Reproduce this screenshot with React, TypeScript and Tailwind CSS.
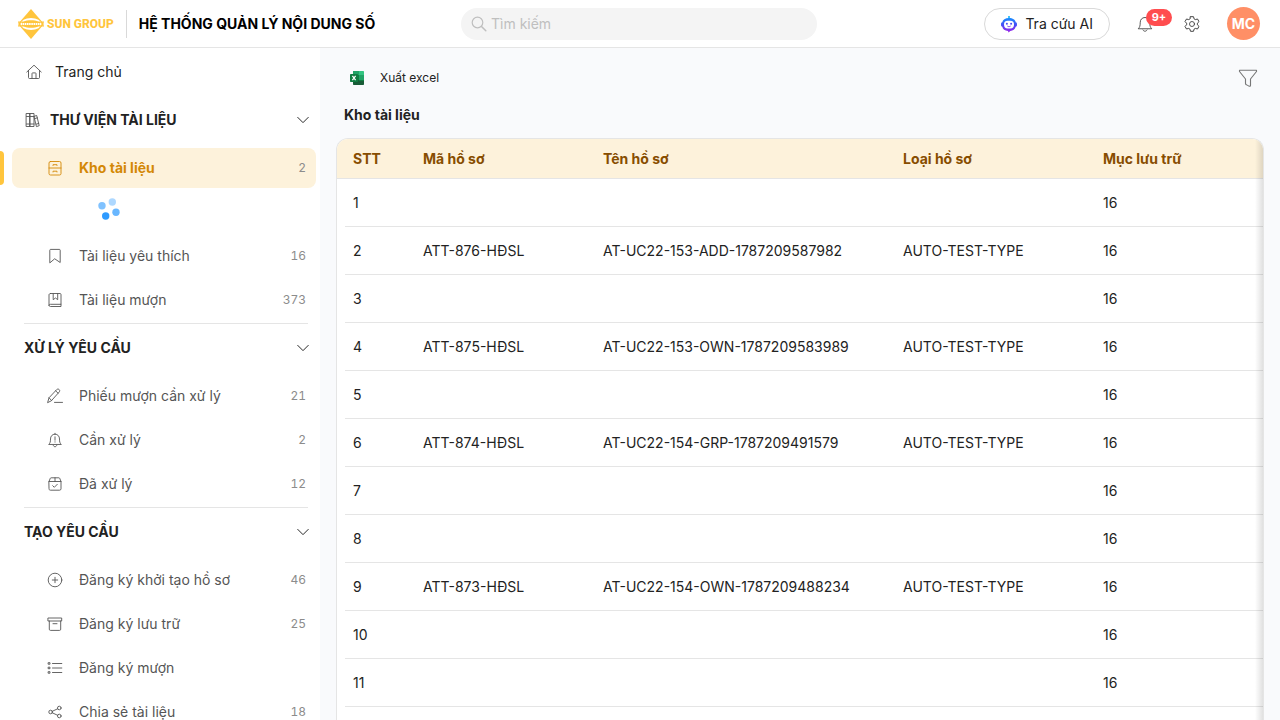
import type { ReactNode } from 'react';

type MenuItem = {
  label: string;
  icon: ReactNode;
  count?: number;
  active?: boolean;
  loading?: boolean;
};

type MenuSection = {
  title: string;
  icon?: ReactNode;
  items: MenuItem[];
};

type Dossier = {
  code?: string;
  name?: string;
  type?: string;
  archive: number;
};

function Icon({ children, className = 'h-4 w-4' }: { children: ReactNode; className?: string }) {
  return (
    <svg
      viewBox="0 0 16 16"
      className={`shrink-0 ${className}`}
      fill="none"
      stroke="currentColor"
      strokeWidth="0.9"
      strokeLinecap="round"
      strokeLinejoin="round"
      aria-hidden="true"
    >
      {children}
    </svg>
  );
}

const icons = {
  home: (
    <Icon>
      <path d="M.8 8 8 1.2 15.2 8M2.5 6.5v7c0 .7.4 1 1 1h9c.6 0 1-.3 1-1v-7M6 14.3V9.5c0-.4.2-.6.6-.6h2.8c.4 0 .6.2.6.6v4.8" />
    </Icon>
  ),
  library: (
    <Icon>
      <path d="M2.5 1.5H6v13H2.5zM6 1.5h4v13H6zM2.5 4.5H10M2.5 12H10M10.3 4.200l2.400-.7 2.500 10.200-2.400.8zM10.900 6.600l2.400-.8M12.200 12.200l2.500-.8" />
    </Icon>
  ),
  cabinet: (
    <Icon>
      <rect x="2" y="1.5" width="12" height="13.5" rx="1.5" />
      <path d="M2 8h12M6 5.5v-.8h4v.8M6 12v-.8h4v.8" />
    </Icon>
  ),
  bookmark: (
    <Icon>
      <path d="M2.8 14.5V2.2c0-.5.3-.8.8-.8h8.8c.5 0 .8.3.8.8v12.3L8 11z" />
    </Icon>
  ),
  book: (
    <Icon>
      <path d="M3.5 1.5H13c.6 0 1 .4 1 1v9.8H3.5c-.9 0-1.5.5-1.5 1.2V3c0-.9.6-1.5 1.5-1.5zM2 13.3c0 .8.6 1.2 1.5 1.2H14v-2.2M6.2 1.7v6L8.5 6l2.2 1.7v-6" />
    </Icon>
  ),
  edit: (
    <Icon>
      <path d="M.7 14.3 2 9.8l7.7-8.2c.7-.7 1.7-.7 2.4-.1.8.7.8 1.7.1 2.500L4.600 12.500zM8.600 2.800l2.500 2.400M2 9.800l2.600 2.700M7.500 14.400h8" />
    </Icon>
  ),
  bellAlert: (
    <Icon>
      <path d="M2 12.2c1.2-1.1 1.5-2.5 1.5-5.2C3.5 4.2 5.3 2.2 8 2.2s4.5 2 4.5 4.8c0 2.7.3 4.1 1.5 5.2zM6.3 13.5c.3.8.9 1.2 1.7 1.2s1.4-.4 1.7-1.2M8 2.2v-.9M8 4.800v3.400M8 9.800v.3" />
    </Icon>
  ),
  boxCheck: (
    <Icon>
      <path d="M2 5.500 3.300 2.300c.1-.3.4-.5.8-.5h7.800c.4 0 .7.2.8.5L14 5.500v7.300c0 .9-.5 1.400-1.400 1.400H3.400C2.500 14.200 2 13.700 2 12.800zM2 5.500h12M8 1.800v3.700M5.700 9.700l1.600 1.600 3-3" />
    </Icon>
  ),
  plusCircle: (
    <Icon>
      <circle cx="8" cy="8" r="6.8" />
      <path d="M8 5.3v5.400M5.300 8h5.400" />
    </Icon>
  ),
  archive: (
    <Icon>
      <path d="M1.300 2h13.400v3H1.300zM2.300 5v8.200c0 .8.4 1.200 1.200 1.200h9c.8 0 1.200-.4 1.200-1.200V5M6 7.700h4" />
    </Icon>
  ),
  list: (
    <Icon>
      <path d="M5.500 3.500h9.300M5.500 8h9.300M5.500 12.500h9.300" />
      <path d="M1.500 2.700H3v1.500H1.500zM1.500 7.200H3v1.500H1.500zM1.500 11.700H3v1.500H1.500z" />
    </Icon>
  ),
  share: (
    <Icon>
      <circle cx="3.6" cy="8" r="1.8" />
      <circle cx="12.3" cy="4" r="1.8" />
      <circle cx="12.3" cy="12" r="1.8" />
      <path d="m5.300 7.300 5.300-2.500M5.300 8.800l5.300 2.500" />
    </Icon>
  ),
};

const sections: MenuSection[] = [
  {
    title: 'THƯ VIỆN TÀI LIỆU',
    icon: icons.library,
    items: [
      { label: 'Kho tài liệu', icon: icons.cabinet, count: 2, active: true, loading: true },
      { label: 'Tài liệu yêu thích', icon: icons.bookmark, count: 16 },
      { label: 'Tài liệu mượn', icon: icons.book, count: 373 },
    ],
  },
  {
    title: 'XỬ LÝ YÊU CẦU',
    items: [
      { label: 'Phiếu mượn cần xử lý', icon: icons.edit, count: 21 },
      { label: 'Cần xử lý', icon: icons.bellAlert, count: 2 },
      { label: 'Đã xử lý', icon: icons.boxCheck, count: 12 },
    ],
  },
  {
    title: 'TẠO YÊU CẦU',
    items: [
      { label: 'Đăng ký khởi tạo hồ sơ', icon: icons.plusCircle, count: 46 },
      { label: 'Đăng ký lưu trữ', icon: icons.archive, count: 25 },
      { label: 'Đăng ký mượn', icon: icons.list },
      { label: 'Chia sẻ tài liệu', icon: icons.share, count: 18 },
    ],
  },
];

const dossiers: Dossier[] = [
  { archive: 16 },
  { code: 'ATT-876-HĐSL', name: 'AT-UC22-153-ADD-1787209587982', type: 'AUTO-TEST-TYPE', archive: 16 },
  { archive: 16 },
  { code: 'ATT-875-HĐSL', name: 'AT-UC22-153-OWN-1787209583989', type: 'AUTO-TEST-TYPE', archive: 16 },
  { archive: 16 },
  { code: 'ATT-874-HĐSL', name: 'AT-UC22-154-GRP-1787209491579', type: 'AUTO-TEST-TYPE', archive: 16 },
  { archive: 16 },
  { archive: 16 },
  { code: 'ATT-873-HĐSL', name: 'AT-UC22-154-OWN-1787209488234', type: 'AUTO-TEST-TYPE', archive: 16 },
  { archive: 16 },
  { archive: 16 },
];

function Logo() {
  return (
    <a href="#" aria-label="Sun Group" className="flex items-center gap-[3px] text-[#ffc53d]">
      <svg viewBox="0 0 26 30" className="h-[30px] w-[26px]" fill="currentColor" aria-hidden="true">
        <path d="M13 0 26 15 13 30 0 15z" />
        <ellipse cx="13" cy="15" rx="10.5" ry="6" fill="#fff" />
        <path d="M0 12.500h5.500c4-1.800 11-1.800 15 0H26v1.300h-4v2.400h4v1.300h-5.500c-4 1.800-11 1.800-15 0H0v-1.300h4v-2.400H0z" />
        <path d="M4.500 15h17" stroke="#fff" strokeWidth="1.8" strokeDasharray="1.6 0.6" />
      </svg>
      <span className="font-['Roboto',sans-serif] text-xs font-extrabold whitespace-nowrap">SUN GROUP</span>
    </a>
  );
}

function RobotIcon() {
  return (
    <svg viewBox="1 0 16 18" className="h-[18px] w-4" aria-hidden="true">
      <defs>
        <linearGradient id="robot" x1="0" y1="0" x2="0" y2="1">
          <stop offset="0" stopColor="#1890ff" />
          <stop offset="0.5" stopColor="#4a4af5" />
          <stop offset="1" stopColor="#a020e8" />
        </linearGradient>
      </defs>
      <path d="M8.200 1h1.600v3H8.200z" fill="#13b5f5" />
      <path
        d="M9 3c3.800 0 6.300 1.700 6.700 4.300 1 .1 1.300.8 1.300 2.200s-.3 2.100-1.300 2.200C15 14.300 13 15.600 10.300 15.900L8.500 17.500 8 16C4.800 15.700 2.700 14.300 2.300 11.700 1.300 11.600 1 10.900 1 9.500s.3-2.100 1.300-2.200C2.700 4.700 5.200 3 9 3z"
        fill="url(#robot)"
      />
      <rect x="4" y="5.8" width="10" height="7.6" rx="3.6" fill="#fff" />
      <circle cx="6.9" cy="8.7" r="1" fill="#4a4af5" />
      <circle cx="11.1" cy="8.7" r="1" fill="#4a4af5" />
      <path d="M7.300 11c1 .9 2.400.9 3.400 0" stroke="#7a35ee" strokeWidth="0.9" fill="none" />
    </svg>
  );
}

function ExcelIcon() {
  return (
    <svg viewBox="0 0 16 16" className="h-4 w-4" aria-hidden="true">
      <path d="M4 1h6v5H4z" fill="#21a366" />
      <path d="M10 1h4c.6 0 1 .4 1 1v3h-5z" fill="#33c481" />
      <path d="M4 5h6v5H4z" fill="#107c41" />
      <path d="M10 5h5v5h-5z" fill="#21a366" />
      <path d="M4 10h11v4c0 .6-.4 1-1 1H5c-.6 0-1-.4-1-1z" fill="#185c37" />
      <path d="M10 10h5v1h-5z" fill="#107c41" />
      <rect x="1" y="4" width="8" height="8" rx="0.8" fill="#107c41" />
      <path d="m3.400 5.800 3.200 4.400M6.600 5.800l-3.200 4.400" stroke="#fff" strokeWidth="1.2" />
    </svg>
  );
}

function Spinner() {
  return (
    <svg viewBox="0 0 24 24" className="h-6 w-6" fill="#1890ff" role="status" aria-label="Loading">
      <circle cx="5" cy="8.7" r="3.7" opacity="0.55" />
      <circle cx="15.3" cy="5" r="3.7" opacity="0.35" />
      <circle cx="8.7" cy="19" r="3.7" opacity="0.9" />
      <circle cx="19" cy="15.3" r="3.7" opacity="0.65" />
    </svg>
  );
}

function TopBar() {
  return (
    <header className="flex h-12 shrink-0 items-center border-b border-[#e5e5e5] bg-white pr-5 pl-[18px]">
      <div className="flex flex-1 items-center">
        <Logo />
        <div className="ml-3 flex h-7 items-center border-l border-[#d9d9d9] pl-3">
          <h1 className="text-sm font-bold whitespace-nowrap text-black">HỆ THỐNG QUẢN LÝ NỘI DUNG SỐ</h1>
        </div>
      </div>

      <label className="flex h-8 w-full max-w-[356px] items-center gap-1 rounded-full bg-[#f4f4f4] px-2.5 text-[#bfbfbf]">
        <Icon>
          <circle cx="6.5" cy="6.5" r="5.3" strokeWidth="1.2" />
          <path d="m10.500 10.500 4.300 4.300" strokeWidth="1.5" />
        </Icon>
        <input
          type="search"
          aria-label="Tìm kiếm"
          placeholder="Tìm kiếm"
          className="w-full bg-transparent text-sm outline-none placeholder:text-[#bfbfbf]"
        />
      </label>

      <div className="flex flex-1 items-center justify-end">
        <button className="flex h-8 items-center gap-2 rounded-full border border-[#d9d9d9] px-4 text-sm whitespace-nowrap text-[#222]">
          <RobotIcon />
          Tra cứu AI
        </button>
        <button aria-label="Thông báo" className="relative ml-[27px] text-[#444]">
          <Icon>
            <path d="M1.500 12.500c1.300-1.300 1.700-2.700 1.700-5.700C3.200 3.600 5 1.500 8 1.500s4.800 2.100 4.800 5.300c0 3 .4 4.400 1.700 5.700zM6 14c.5.8 1.100 1.200 2 1.200s1.500-.4 2-1.200" />
          </Icon>
          <span className="absolute -top-[7px] left-[9px] w-[26px] rounded-full bg-[#ff4d4f] text-center text-[11px] leading-[17px] font-bold text-white">
            9+
          </span>
        </button>
        <button aria-label="Cài đặt" className="ml-[31px] text-[#444]">
          <Icon>
            <path
              d="M6.500.7h3l.6 2.200 1.200.7 2.200-.6 1.500 2.600L13.400 7.200v1.600l1.600 1.600-1.500 2.600-2.200-.6-1.200.7-.6 2.200h-3l-.6-2.200-1.200-.7-2.200.6L1 10.400l1.600-1.600V7.200L1 5.600 2.500 3l2.200.6 1.200-.7z"
              strokeWidth="1"
            />
            <circle cx="8" cy="8" r="2.500" />
          </Icon>
        </button>
        <button className="ml-[27px] h-[33px] w-[33px] rounded-full bg-[#ff8f66] text-sm font-bold text-white">
          MC
        </button>
      </div>
    </header>
  );
}

function MenuRow({ item }: { item: MenuItem }) {
  return (
    <li className="relative">
      {item.active && <span className="absolute top-[3px] -left-3 h-[34px] w-1 rounded-r bg-[#ffc53d]" />}
      <a
        href="#"
        className={`flex h-10 items-center rounded-lg pr-2.5 pl-[35px] text-sm ${
          item.active ? 'bg-[#fdf2db] font-bold text-[#d48806]' : 'text-[#555]'
        }`}
      >
        {item.icon}
        <span className="ml-4 flex-1">{item.label}</span>
        <span className="text-xs font-normal text-[#8c8c8c] tabular-nums">{item.count}</span>
      </a>
      {item.loading && (
        <div className="flex h-11 items-center pb-0.5 pl-[85px]">
          <Spinner />
        </div>
      )}
    </li>
  );
}

function Sidebar() {
  return (
    <nav className="w-80 shrink-0 overflow-hidden bg-white pt-1 pr-1 pl-3">
      <a href="#" className="flex h-10 items-center gap-[13px] pl-3.5 text-sm text-[#222]">
        <span className="text-[#555]">{icons.home}</span>
        Trang chủ
      </a>
      {sections.map((section, index) => (
        <section key={section.title} className={index === 0 ? 'mt-2' : ''}>
          {index > 0 && <hr className="mt-[3px] mr-2 mb-1 ml-3 border-[#e5e5e5]" />}
          <button className="flex h-10 w-full items-center gap-2.5 pr-[7px] pl-3 text-sm font-bold text-[#222]">
            {section.icon && <span className="text-[#555]">{section.icon}</span>}
            <span className="flex-1 text-left">{section.title}</span>
            <Icon className="h-3 w-3">
              <path d="M1 4.500 8 11.500l7-7" strokeWidth="1.3" />
            </Icon>
          </button>
          <ul className="mt-2 flex flex-col gap-1">
            {section.items.map((item) => (
              <MenuRow key={item.label} item={item} />
            ))}
          </ul>
        </section>
      ))}
    </nav>
  );
}

function DossierTable() {
  return (
    <div className="relative min-h-0 flex-1 overflow-hidden rounded-t-xl border border-b-0 border-[#e5e5e5] bg-white">
      <table className="w-full min-w-[1100px] table-fixed border-separate border-spacing-0 text-left text-sm text-[#222]">
        <colgroup>
          <col className="w-[70px]" />
          <col className="w-[180px]" />
          <col className="w-[300px]" />
          <col className="w-[200px]" />
          <col />
        </colgroup>
        <thead className="bg-[#fdf2db] text-[#874d00]">
          <tr className="h-10">
            {['STT', 'Mã hồ sơ', 'Tên hồ sơ', 'Loại hồ sơ', 'Mục lưu trữ'].map((title) => (
              <th key={title} className="border-b border-[#e5e5e5] px-4 font-bold">
                {title}
              </th>
            ))}
          </tr>
        </thead>
        <tbody>
          {dossiers.map((row, index) => (
            <tr key={index} className="h-12">
              <td className="pl-2">
                <div className="flex h-12 items-center border-b border-[#e5e5e5] pl-2">{index + 1}</div>
              </td>
              <td className="border-b border-[#e5e5e5] px-4">{row.code}</td>
              <td className="border-b border-[#e5e5e5] px-4">{row.name}</td>
              <td className="border-b border-[#e5e5e5] px-4">{row.type}</td>
              <td className="border-b border-[#e5e5e5] px-4">{row.archive}</td>
            </tr>
          ))}
        </tbody>
      </table>
      <div className="pointer-events-none absolute inset-y-0 right-0 w-2 bg-linear-to-l from-black/12 to-transparent" />
    </div>
  );
}

export default function App() {
  return (
    <div className="flex h-screen flex-col overflow-hidden font-['Inter',sans-serif]">
      <TopBar />
      <div className="flex min-h-0 flex-1">
        <Sidebar />
        <main className="flex min-w-0 flex-1 flex-col bg-[#f9fafc] px-4">
          <div className="flex h-[60px] shrink-0 items-center justify-between pr-1.5 pl-[13px]">
            <button className="flex items-center gap-[15px] text-xs text-[#222]">
              <ExcelIcon />
              Xuất excel
            </button>
            <button aria-label="Bộ lọc" className="text-[#777]">
              <Icon className="h-5 w-5">
                <path d="M1.200 1.800h13.600v1L10 8.800v5c0 .8-.6 1-1.200.7l-2.200-1.200c-.4-.2-.6-.5-.6-.9V8.800L1.200 2.800z" />
              </Icon>
            </button>
          </div>
          <h2 className="mb-4 ml-2 shrink-0 text-sm leading-[14px] font-bold text-[#222]">Kho tài liệu</h2>
          <DossierTable />
        </main>
      </div>
    </div>
  );
}
